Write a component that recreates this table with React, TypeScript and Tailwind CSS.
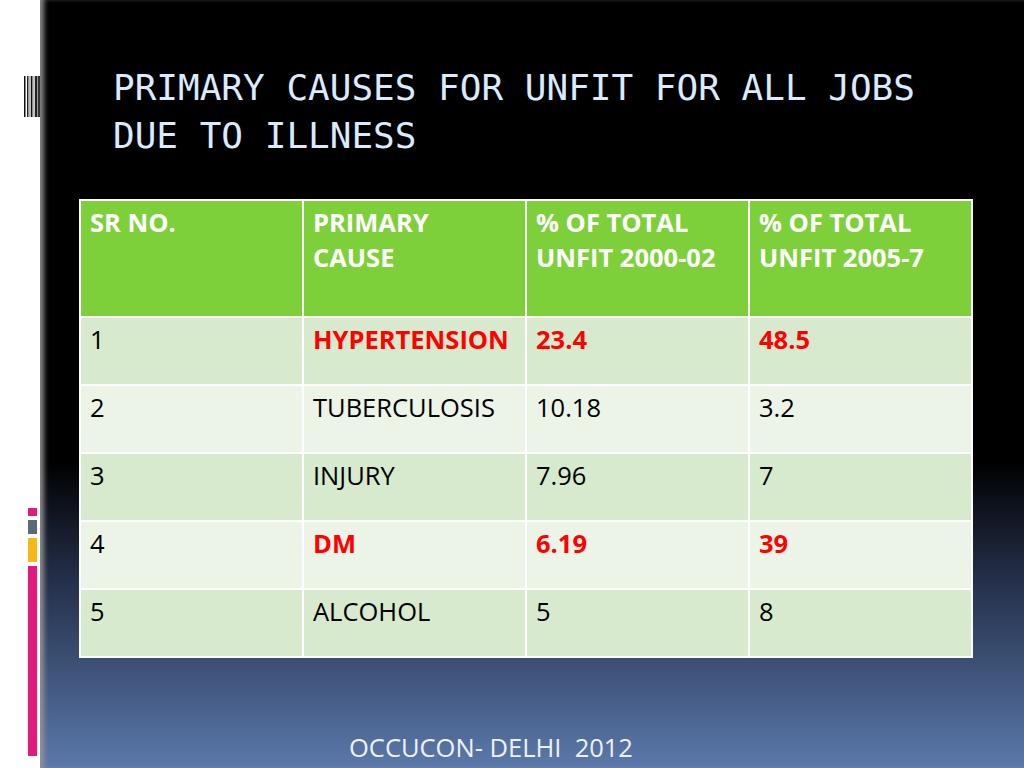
import React from 'react';

const rows = [
    { no: '1', cause: 'HYPERTENSION', a: '23.4', b: '48.5', hot: true },
    { no: '2', cause: 'TUBERCULOSIS', a: '10.18', b: '3.2', hot: false },
    { no: '3', cause: 'INJURY', a: '7.96', b: '7', hot: false },
    { no: '4', cause: 'DM', a: '6.19', b: '39', hot: true },
    { no: '5', cause: 'ALCOHOL', a: '5', b: '8', hot: false },
];

const Barcode = () => (
    <svg width="16" height="41" viewBox="0 0 16 41">
        <rect x="0" y="0" width="1.5" height="41" fill="#111" />
        <rect x="3" y="0" width="1.5" height="41" fill="#222" />
        <rect x="5.5" y="0" width="1" height="41" fill="#777" />
        <rect x="7" y="0" width="1.5" height="41" fill="#111" />
        <rect x="9.5" y="0" width="1" height="41" fill="#888" />
        <rect x="11" y="0" width="2" height="41" fill="#222" />
        <rect x="13.5" y="0" width="2.5" height="41" fill="#333" />
    </svg>
);

const App = () => {
    return (
        <div className="w-[1024px] h-[768px] flex overflow-hidden">
            {/* Left white frame */}
            <aside className="w-[40px] shrink-0 bg-white flex flex-col items-end">
                <div className="mt-[76px]">
                    <Barcode />
                </div>
                <div className="mt-[391px] mr-[3px] flex flex-col gap-[4px] w-[9px]">
                    <div className="h-[8px] bg-[#e4197c]" />
                    <div className="h-[14px] bg-[#5b6878]" />
                    <div className="h-[24px] bg-[#f8b714]" />
                    <div className="h-[190px] bg-[#e4197c]" />
                </div>
            </aside>

            {/* Slide body */}
            <main className="flex-1 flex flex-col bg-[linear-gradient(to_bottom,#000_0%,#000_60%,#25314c_76%,#5b79ab_100%)] shadow-[inset_6px_0_5px_-2px_rgba(150,150,150,0.9)]">
                <h1 className="pl-[73px] pt-[64px] text-[36px] leading-[48px] text-[#dbeafc] font-['DejaVu_Sans_Mono',monospace] font-normal">
                    PRIMARY CAUSES FOR UNFIT FOR ALL JOBS
                    <br />
                    DUE TO ILLNESS
                </h1>

                <table className="ml-[39px] mt-[39px] w-[894px] table-fixed border-collapse border-2 border-white font-['Open_Sans',sans-serif] text-[25.5px] leading-[35px]">
                    <thead>
                        <tr className="h-[117px] bg-[#7ed03b] text-white font-bold">
                            <th className="border-2 border-white align-top text-left font-bold px-[9px] pt-[4px]">SR NO.</th>
                            <th className="border-2 border-white align-top text-left font-bold px-[9px] pt-[4px]">PRIMARY<br />CAUSE</th>
                            <th className="border-2 border-white align-top text-left font-bold px-[9px] pt-[4px]">% OF TOTAL<br />UNFIT 2000-02</th>
                            <th className="border-2 border-white align-top text-left font-bold px-[9px] pt-[4px]">% OF TOTAL<br />UNFIT 2005-7</th>
                        </tr>
                    </thead>
                    <tbody>
                        {rows.map((r, i) => (
                            <tr key={r.no} className={`h-[68px] ${i % 2 === 0 ? 'bg-[#d7eacd]' : 'bg-[#ebf4e6]'}`}>
                                <td className="border-2 border-white align-top px-[9px] pt-[4px] text-black">{r.no}</td>
                                <td className={`border-2 border-white align-top px-[9px] pt-[4px] ${r.hot ? 'text-[#ff0000] font-bold' : 'text-black'}`}>{r.cause}</td>
                                <td className={`border-2 border-white align-top px-[9px] pt-[4px] ${r.hot ? 'text-[#ff0000] font-bold' : 'text-black'}`}>{r.a}</td>
                                <td className={`border-2 border-white align-top px-[9px] pt-[4px] ${r.hot ? 'text-[#ff0000] font-bold' : 'text-black'}`}>{r.b}</td>
                            </tr>
                        ))}
                    </tbody>
                </table>

                <p className="mt-[72px] pl-[309px] text-[25.5px] leading-[34px] text-[#eef2f8] font-['Open_Sans',sans-serif] whitespace-pre">
                    OCCUCON- DELHI  2012
                </p>
            </main>
        </div>
    );
};

export default App;
